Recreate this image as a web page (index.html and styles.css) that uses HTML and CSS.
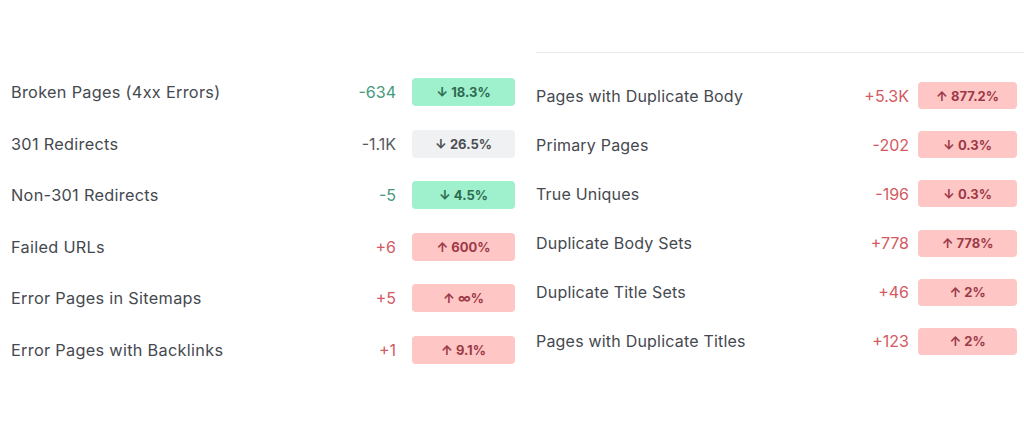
FILE: index.html
```html
<!DOCTYPE html>
<html>
<head>
<meta charset="utf-8">
<link rel="stylesheet" href="styles.css">
</head>
<body>
<div class="page">
  <section class="col col-left">
    <div class="row"><span class="label">Broken Pages (4xx Errors)</span><span class="num good">-634</span><span class="badge b-good">↓ 18.3%</span></div>
    <div class="row"><span class="label">301 Redirects</span><span class="num neutral">-1.1K</span><span class="badge b-neutral">↓ 26.5%</span></div>
    <div class="row"><span class="label">Non-301 Redirects</span><span class="num good">-5</span><span class="badge b-good">↓ 4.5%</span></div>
    <div class="row"><span class="label">Failed URLs</span><span class="num bad">+6</span><span class="badge b-bad">↑ 600%</span></div>
    <div class="row"><span class="label">Error Pages in Sitemaps</span><span class="num bad">+5</span><span class="badge b-bad">↑ ∞%</span></div>
    <div class="row"><span class="label">Error Pages with Backlinks</span><span class="num bad">+1</span><span class="badge b-bad">↑ 9.1%</span></div>
  </section>
  <section class="col col-right">
    <div class="row"><span class="label">Pages with Duplicate Body</span><span class="num bad">+5.3K</span><span class="badge b-bad">↑ 877.2%</span></div>
    <div class="row"><span class="label">Primary Pages</span><span class="num bad">-202</span><span class="badge b-bad">↓ 0.3%</span></div>
    <div class="row"><span class="label">True Uniques</span><span class="num bad">-196</span><span class="badge b-bad">↓ 0.3%</span></div>
    <div class="row"><span class="label">Duplicate Body Sets</span><span class="num bad">+778</span><span class="badge b-bad">↑ 778%</span></div>
    <div class="row"><span class="label">Duplicate Title Sets</span><span class="num bad">+46</span><span class="badge b-bad">↑ 2%</span></div>
    <div class="row"><span class="label">Pages with Duplicate Titles</span><span class="num bad">+123</span><span class="badge b-bad">↑ 2%</span></div>
  </section>
</div>
</body>
</html>
```

FILE: styles.css
```css
html, body {
  margin: 0;
  padding: 0;
  background: #ffffff;
}
body {
  font-family: Inter, "Noto Sans", sans-serif;
  color: #3d4247;
  width: 1024px;
  height: 427px;
  overflow: hidden;
}
.page {
  display: flex;
}
.col {
  display: flex;
  flex-direction: column;
}
.col-left {
  width: 515px;
  padding-left: 11px;
  box-sizing: border-box;
  padding-top: 78px;
  gap: 23.6px;
}
.col-right {
  margin-left: 21px;
  margin-top: 52px;
  width: 488px;
  border-top: 1px solid #e9eaec;
  padding-top: 29px;
  gap: 22.2px;
}
.col-left .row { height: 28px; }
.col-right .row { height: 27px; padding-right: 7px; }
.row {
  display: flex;
  align-items: center;
}
.label {
  flex: 1;
  font-size: 16px;
  color: #45494f;
  letter-spacing: 0.2px;
}
.col-left .label { font-size: 16.3px; letter-spacing: 0.3px; }
.num {
  font-size: 16px;
  text-align: right;
  margin-right: 16px;
}
.col-right .num { margin-right: 9px; }
.good { color: #45997c; }
.neutral { color: #55595e; }
.bad { color: #d35a62; }
.badge {
  height: 100%;
  border-radius: 4px;
  display: flex;
  align-items: center;
  justify-content: center;
  font-size: 13px;
  font-weight: 700;
}
.col-left .badge { width: 103px; }
.col-right .badge { width: 99px; }
.b-good { background: #9ff0cc; color: #2d6b50; }
.b-neutral { background: #f0f1f3; color: #4a4e53; }
.b-bad { background: #ffc6c6; color: #9c3a47; }
```
